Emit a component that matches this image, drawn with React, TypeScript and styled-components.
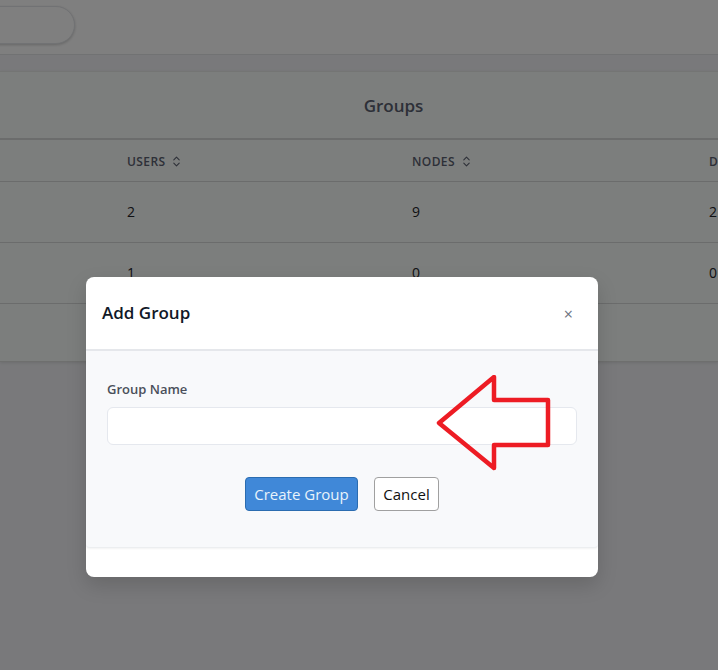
import React from 'react'
import styled, { createGlobalStyle } from 'styled-components'
import { ChevronsUpDown } from 'lucide-react'

const columns = ['USERS', 'NODES', 'DEVICES']
const rows = [
  ['2', '9', '2'],
  ['1', '0', '0'],
]

const App: React.FC = () => {
  return (
    <Page>
      <GlobalStyle />
      <TopBar>
        <SearchPill />
      </TopBar>
      <Card>
        <CardTitle>Groups</CardTitle>
        <HeadRow>
          {columns.map((name) => (
            <HeadCell key={name}>
              {name}
              <ChevronsUpDown size={13} strokeWidth={2} />
            </HeadCell>
          ))}
        </HeadRow>
        {rows.map((row, i) => (
          <BodyRow key={i}>
            {row.map((value, j) => (
              <BodyCell key={j}>{value}</BodyCell>
            ))}
          </BodyRow>
        ))}
      </Card>
      <Overlay>
        <Modal>
          <ModalHeader>
            <ModalTitle>Add Group</ModalTitle>
            <CloseButton>×</CloseButton>
          </ModalHeader>
          <ModalBody>
            <FieldLabel>Group Name</FieldLabel>
            <FieldInput />
            <ModalActions>
              <PrimaryButton>Create Group</PrimaryButton>
              <SecondaryButton>Cancel</SecondaryButton>
            </ModalActions>
          </ModalBody>
        </Modal>
      </Overlay>
      <Arrow width='116' height='100' viewBox='0 0 116 100'>
        <path
          d='M58 2 L58 25 L112 25 L112 70 L58 70 L58 93 L3 48 Z'
          fill='none'
          stroke='#ed1c24'
          strokeWidth='4.5'
          strokeLinejoin='round'
        />
      </Arrow>
    </Page>
  )
}

export default App

const GlobalStyle = createGlobalStyle`
  html,
  body {
    margin: 0;
    height: 100%;
  }

  body {
    font-family: 'Open Sans', 'Noto Sans', sans-serif;
  }
`

const Page = styled.div`
  position: relative;
  width: 718px;
  height: 670px;
  overflow: hidden;
  background: #f2f3f6;
`

const TopBar = styled.div`
  box-sizing: border-box;
  height: 55px;
  padding-top: 6px;
  border-bottom: 1px solid #e2e4e6;
  background: #fff;
`

const SearchPill = styled.div`
  box-sizing: border-box;
  width: 175px;
  height: 38px;
  margin-left: -100px;
  border: 1px solid #e2e4e8;
  border-radius: 19px;
  background: #fff;
  box-shadow: 0 1px 3px rgba(0, 0, 0, 0.2);
`

const Card = styled.div`
  margin-top: 16px;
  border-top: 1px solid #e8ebe9;
  border-bottom: 1px solid #dcdedc;
  padding-bottom: 57px;
  background: #f9fcfa;
  box-shadow: 0 1px 3px rgba(0, 0, 0, 0.1);
`

const CardTitle = styled.div`
  box-sizing: border-box;
  height: 68px;
  padding-left: 69px;
  border-bottom: 2px solid #d6d8d8;
  font-size: 17px;
  font-weight: 600;
  line-height: 68px;
  text-align: center;
  color: #5a6070;
`

const HeadRow = styled.div`
  display: grid;
  grid-template-columns: 285px 297px 285px;
  box-sizing: border-box;
  height: 42px;
  padding-left: 127px;
  border-bottom: 1px solid #d6d8d8;
  white-space: nowrap;
`

const HeadCell = styled.div`
  display: flex;
  align-items: center;
  gap: 5px;
  padding-top: 2px;
  font-size: 12px;
  font-weight: 600;
  letter-spacing: 0.4px;
  color: #5a6070;
`

const BodyRow = styled.div`
  display: grid;
  grid-template-columns: 285px 297px 285px;
  box-sizing: border-box;
  height: 61px;
  padding: 0 0 2px 127px;
  border-bottom: 1px solid #d6d8d8;
`

const BodyCell = styled.div`
  display: flex;
  align-items: center;
  font-size: 14px;
  color: #222428;
`

const Overlay = styled.div`
  position: absolute;
  inset: 0;
  display: flex;
  align-items: flex-start;
  justify-content: center;
  padding-right: 34px;
  background: rgba(0, 0, 0, 0.5);
`

const Modal = styled.div`
  box-sizing: border-box;
  width: 512px;
  height: 300px;
  margin-top: 277px;
  border-radius: 8px;
  background: #fff;
  box-shadow: 0 8px 20px rgba(0, 0, 0, 0.15);
`

const ModalHeader = styled.div`
  display: flex;
  align-items: center;
  justify-content: space-between;
  box-sizing: border-box;
  height: 74px;
  padding: 2px 25px 0 16px;
  border-bottom: 2px solid #e5e7eb;
`

const ModalTitle = styled.h2`
  margin: 0 0 3px;
  font-size: 17px;
  font-weight: 600;
  color: #111827;
`

const CloseButton = styled.button`
  padding: 0;
  border: 0;
  background: none;
  font-family: inherit;
  font-size: 16px;
  line-height: 1;
  color: #6b7280;
`

const ModalBody = styled.div`
  box-sizing: border-box;
  height: 197px;
  padding: 28px 21px 0 21px;
  border-bottom: 1px solid #eceef0;
  border-radius: 0 0 4px 4px;
  background: #f8f9fb;
  box-shadow: 0 1px 2px rgba(0, 0, 0, 0.05);
`

const FieldLabel = styled.label`
  display: block;
  margin-bottom: 8px;
  font-size: 13px;
  font-weight: 600;
  line-height: 20px;
  color: #4a4f5a;
`

const FieldInput = styled.input`
  display: block;
  box-sizing: border-box;
  width: 100%;
  height: 38px;
  border: 1px solid #e5e8ee;
  border-radius: 6px;
  background: #fff;
`

const ModalActions = styled.div`
  display: flex;
  justify-content: center;
  gap: 16px;
  margin-top: 32px;
`

const PrimaryButton = styled.button`
  box-sizing: border-box;
  min-width: 113px;
  height: 34px;
  padding: 0 8px;
  border: 1px solid #2b6cb0;
  border-radius: 4px;
  background: #4088d8;
  font-family: inherit;
  font-size: 15px;
  color: #e8f3fb;
`

const SecondaryButton = styled.button`
  box-sizing: border-box;
  min-width: 65px;
  height: 34px;
  padding: 0 8px;
  border: 1px solid #a0a0a0;
  border-radius: 4px;
  background: #fff;
  font-family: inherit;
  font-size: 15px;
  color: #111;
`

const Arrow = styled.svg`
  position: absolute;
  left: 436px;
  top: 375px;
`
